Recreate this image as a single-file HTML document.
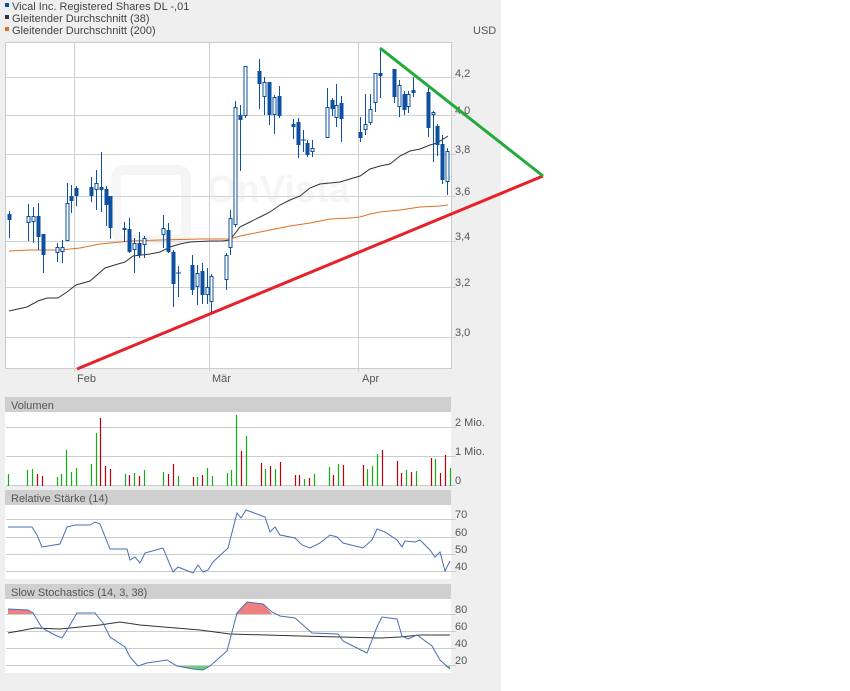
<!DOCTYPE html>
<html><head><meta charset="utf-8"><style>
html,body{margin:0;padding:0;background:#fff;}
svg{display:block;font-family:"Liberation Sans",sans-serif;}
</style></head><body>
<svg width="850" height="691" viewBox="0 0 850 691" xmlns="http://www.w3.org/2000/svg">
<rect x="0" y="0" width="501" height="691" fill="#efefef"/>
<rect x="5" y="3" width="4" height="4" fill="#0d4fa0"/>
<text x="12" y="10" font-size="11" fill="#444">Vical Inc. Registered Shares DL -,01</text>
<rect x="5" y="15" width="4" height="4" fill="#333"/>
<text x="12" y="22" font-size="11" fill="#444">Gleitender Durchschnitt (38)</text>
<rect x="5" y="27" width="4" height="4" fill="#e07020"/>
<text x="12" y="34" font-size="11" fill="#444">Gleitender Durchschnitt (200)</text>
<text x="473" y="34" font-size="11" fill="#555">USD</text>
<rect x="5.5" y="42.5" width="446" height="326" fill="#fff" stroke="#ccc"/>
<g stroke="#d0d0d0" stroke-width="1">
<path d="M6 77.5H456M6 115.5H456M6 154.5H456M6 196.5H456M6 241.5H456M6 287.5H456M6 337.5H456"/>
<path d="M74.5 43V372M209.5 43V372M358.5 43V372"/>
</g>
<g font-size="11" fill="#555">
<text x="455" y="77">4,2</text><text x="455" y="114">4,0</text><text x="455" y="153">3,8</text>
<text x="455" y="195">3,6</text><text x="455" y="240">3,4</text><text x="455" y="286">3,2</text><text x="455" y="336">3,0</text>
<text x="77" y="382">Feb</text><text x="212" y="382">Mär</text><text x="362" y="382">Apr</text>
</g>
<g opacity="0.35">
<rect x="116" y="170" width="70" height="70" rx="8" fill="none" stroke="#e4e4e4" stroke-width="10"/>
<text x="207" y="202" font-size="38" font-weight="bold" fill="#e4e4e4">OnVista</text>
</g>
<polyline fill="none" stroke="#e07020" stroke-width="1" points="9,251 30,250 60,250 80,248 100,244 130,241 160,240 200,239 230,239 240,236 250,234 270,230 290,226 310,223 330,219 350,218 360,217 370,214 380,212 400,210 420,207 440,206 448,205"/>
<polyline fill="none" stroke="#333" stroke-width="1" points="9,311 27,307 38,301 47,298 58,298 67,292 76,285 90,281 105,268 118,264 125,262 133,256 150,254 160,252 170,247 180,244 190,242 210,241 222,241 230,240 240,227 250,222 260,217 270,212 280,205 290,200 300,196 310,188 320,184 340,182 360,176 370,169 380,166 390,164 400,156 410,151 420,149 430,145 437,143 448,136"/>
<path stroke="#0d4fa0" stroke-width="1" fill="none" d="M9.5 211V238M28.5 204V241M33.5 207V243M38.5 203V250M43.5 234V273M57.5 243V262M62.5 240V263M67.5 183V241M71.5 185V213M76.5 186V206M91.5 177V202M96.5 170V210M101.5 152V212M106.5 186V226M110.5 196V239M124.5 222V242M129.5 218V253M134.5 238V273M139.5 232V258M144.5 236V258M163.5 215V248M168.5 223V253M173.5 250V307M178.5 266V297M192.5 255V295M197.5 265V305M202.5 263V304M207.5 268V304M211.5 274V313M226.5 253V290M230.5 210V255M235.5 101V227M240.5 105V171M245.5 66V118M259.5 59V109M264.5 77V115M269.5 82V125M274.5 95V134M279.5 86V118M293.5 119V139M298.5 118V158M303.5 130V152M307.5 140V157M312.5 140V157M327.5 88V138M332.5 98V116M336.5 84V127M341.5 96V142M360.5 117V142M365.5 94V135M370.5 94V125M375.5 73V112M380.5 48V98M394.5 69V103M399.5 80V117M404.5 91V115M408.5 91V113M413.5 77V97M428.5 88V137M433.5 111V162M437.5 124V156M442.5 135V184M447.5 148V195M176 273H181M301 140H306"/>
<g fill="#0d4fa0">
<rect x="7.5" y="214" width="4" height="6"/><rect x="36.5" y="216" width="4" height="21"/><rect x="41.5" y="234" width="4" height="21"/>
<rect x="69.5" y="196" width="4" height="5"/><rect x="74.5" y="188" width="4" height="8"/><rect x="89.5" y="187" width="4" height="9"/>
<rect x="99.5" y="187" width="4" height="3"/><rect x="104.5" y="189" width="4" height="16"/><rect x="108.5" y="196" width="4" height="32"/>
<rect x="122.5" y="228" width="4" height="2"/><rect x="127.5" y="229" width="4" height="23"/><rect x="137.5" y="243" width="4" height="12"/>
<rect x="166.5" y="230" width="4" height="22"/><rect x="171.5" y="252" width="4" height="32"/><rect x="190.5" y="265" width="4" height="25"/>
<rect x="200.5" y="271" width="4" height="24"/><rect x="238.5" y="115" width="4" height="5"/><rect x="257.5" y="71" width="4" height="13"/>
<rect x="267.5" y="82" width="4" height="33"/><rect x="277.5" y="96" width="4" height="20"/><rect x="291.5" y="124" width="4" height="3"/>
<rect x="296.5" y="122" width="4" height="23"/><rect x="305.5" y="143" width="4" height="12"/><rect x="330.5" y="100" width="4" height="9"/>
<rect x="339.5" y="103" width="4" height="16"/><rect x="358.5" y="132" width="4" height="6"/><rect x="378.5" y="73" width="4" height="3"/>
<rect x="392.5" y="69" width="4" height="28"/><rect x="402.5" y="94" width="4" height="16"/><rect x="411.5" y="90" width="4" height="3"/>
<rect x="426.5" y="92" width="4" height="36"/><rect x="435.5" y="126" width="4" height="19"/><rect x="440.5" y="144" width="4" height="36"/>
</g>
<g fill="#fff" stroke="#0d4fa0" stroke-width="1">
<rect x="27" y="216.5" width="3" height="6"/><rect x="32" y="216.5" width="3" height="5"/><rect x="56" y="247.5" width="3" height="5"/>
<rect x="61" y="247.5" width="3" height="4"/><rect x="66" y="203.5" width="3" height="37"/><rect x="95" y="183.5" width="3" height="6"/>
<rect x="133" y="243.5" width="3" height="6"/><rect x="143" y="238.5" width="3" height="6"/><rect x="162" y="228.5" width="3" height="6"/>
<rect x="196" y="273.5" width="3" height="13"/><rect x="206" y="287.5" width="3" height="7"/><rect x="210" y="276.5" width="3" height="25"/>
<rect x="225" y="255.5" width="3" height="24"/><rect x="229" y="218.5" width="3" height="29"/><rect x="234" y="107.5" width="3" height="117"/>
<rect x="244" y="66.5" width="3" height="49"/><rect x="263" y="82.5" width="3" height="14"/><rect x="273" y="97.5" width="3" height="17"/>
<rect x="311" y="148.5" width="3" height="3"/><rect x="326" y="107.5" width="3" height="30"/><rect x="335" y="105.5" width="3" height="12"/>
<rect x="364" y="124.5" width="3" height="5"/><rect x="369" y="109.5" width="3" height="13"/><rect x="374" y="73.5" width="3" height="29"/>
<rect x="398" y="85.5" width="3" height="21"/><rect x="407" y="94.5" width="3" height="12"/><rect x="432" y="112.5" width="3" height="2"/>
<rect x="446" y="151.5" width="3" height="30"/>
</g>
<line x1="77" y1="369" x2="543" y2="176" stroke="#e8202a" stroke-width="3"/>
<line x1="380" y1="48" x2="543" y2="176" stroke="#22aa3a" stroke-width="3"/>
<rect x="5" y="397" width="446" height="15" fill="#cfcfcf"/>
<text x="11" y="409" font-size="11" fill="#555">Volumen</text>
<rect x="5" y="412" width="446" height="74" fill="#fff"/>
<path d="M6 427.5H456M6 456.5H456M6 485.5H456" stroke="#ccc"/>
<g font-size="11" fill="#555"><text x="455" y="426">2 Mio.</text><text x="455" y="455">1 Mio.</text><text x="455" y="484">0</text></g>
<g stroke="#10b010" stroke-width="1.2"><path d="M8.5 474V486M27.5 470V486M32.5 469V486M57.5 477V486M61.5 474V486M66.5 450V486M71.5 472V486M76.5 468V486M91.5 464V486M96.5 433V486M125.5 474V486M134.5 473V486M144.5 470V486M163.5 472V486M178.5 476V486M197.5 477V486M207.5 468V486M212.5 476V486M227.5 473V486M231.5 470V486M236.5 415V486M246.5 436V486M265.5 469V486M275.5 469V486M304.5 479V486M314.5 474V486M329.5 467V486M338.5 464V486M367.5 469V486M372.5 466V486M377.5 454V486M406.5 470V486M416.5 471V486M435.5 459V486M450.5 468V486"/></g>
<g stroke="#c00010" stroke-width="1.2"><path d="M37.5 474V486M42.5 476V486M100.5 418V486M105.5 466V486M110.5 469V486M129.5 475V486M139.5 476V486M168.5 474V486M173.5 464V486M193.5 477V486M202.5 475V486M241.5 451V486M261.5 463V486M270.5 466V486M280.5 462V486M295.5 475V486M299.5 475V486M309.5 478V486M333.5 475V486M343.5 465V486M363.5 465V486M382.5 450V486M397.5 461V486M401.5 473V486M411.5 472V486M431.5 458V486M440.5 473V486M445.5 455V486"/></g>
<rect x="5" y="490" width="446" height="15" fill="#cfcfcf"/>
<text x="11" y="502" font-size="11" fill="#555">Relative Stärke (14)</text>
<rect x="5" y="505" width="446" height="74" fill="#fff"/>
<path d="M6 519.5H456M6 537.5H456M6 554.5H456M6 571.5H456" stroke="#ccc"/>
<g font-size="11" fill="#555"><text x="455" y="518">70</text><text x="455" y="536">60</text><text x="455" y="553">50</text><text x="455" y="570">40</text></g>
<polyline fill="none" stroke="#4a6fb5" stroke-width="1" points="8,527 32,527 37,535 42,547 60,544 67,527 75,525 90,525 95,522 100,524 110,549 127,549 130,560 135,557 140,563 145,553 163,548 173,572 178,567 193,573 198,565 203,572 208,570 213,562 228,548 237,513 241,518 246,510 265,517 270,532 275,527 280,535 295,538 302,545 310,548 320,543 330,535 337,537 343,543 363,548 372,540 377,529 385,532 397,540 402,547 405,541 415,542 420,540 430,550 435,557 440,552 445,571 450,561"/>
<rect x="5" y="584" width="446" height="15" fill="#cfcfcf"/>
<text x="11" y="596" font-size="11" fill="#555">Slow Stochastics (14, 3, 38)</text>
<rect x="5" y="599" width="446" height="74" fill="#fff"/>
<polygon fill="#f08080" points="8,614 8,609 28,610 33,614"/>
<polygon fill="#f08080" points="235,614 237,613 247,602 263,604 272,614"/>
<polygon fill="#70d070" points="175,665 177,666 193,669 203,670 210,666 212,665"/>
<polygon fill="#70d070" points="443,665 450,665 450,669"/>
<path d="M6 614.5H456M6 631.5H456M6 648.5H456M6 665.5H456" stroke="#ccc"/>
<g font-size="11" fill="#555"><text x="455" y="613">80</text><text x="455" y="630">60</text><text x="455" y="647">40</text><text x="455" y="664">20</text></g>
<polyline fill="none" stroke="#333" stroke-width="1" points="8,633 35,628 60,629 100,625 120,622 140,625 200,630 230,634 300,636 340,637 380,638 400,637 420,635 450,635"/>
<polyline fill="none" stroke="#4a6fb5" stroke-width="1" points="8,609 28,610 33,613 42,628 55,635 62,638 67,630 77,613 95,613 103,623 110,637 125,647 130,657 138,666 147,663 167,660 177,666 193,669 203,670 210,666 227,651 237,613 247,602 263,604 272,612 280,616 295,618 312,633 338,634 343,641 367,653 377,627 382,617 397,619 402,636 408,639 417,635 432,646 440,660 450,669"/>
</svg>
</body></html>
